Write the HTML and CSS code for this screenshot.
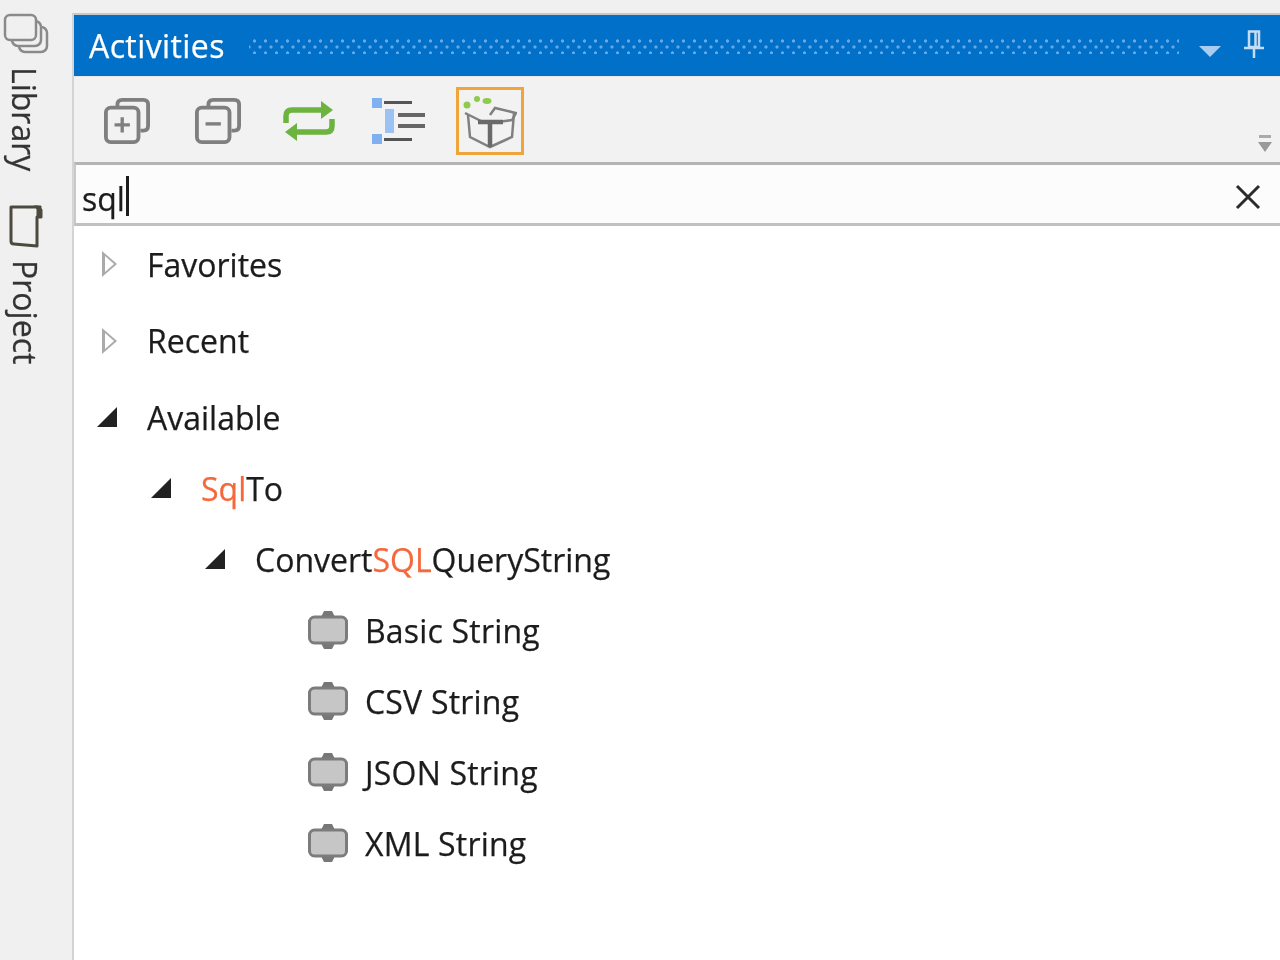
FILE: index.html
```html
<!DOCTYPE html>
<html lang="en">
<head>
  <meta charset="UTF-8" />
  <title>Activities</title>
  <link rel="stylesheet" href="styles.css">
</head>
<body>
<div class="page">
  <div class="rail">
    <div class="rail-tab rail-library">
      <svg class="rail-icon" width="46" height="42" viewBox="0 0 46 42" fill="#f0f0f0" stroke="#8a8a8a" stroke-width="2.5">
        <rect x="16" y="14" width="28" height="25" rx="6"/>
        <rect x="9" y="8" width="29" height="25" rx="6"/>
        <rect x="2" y="2" width="31" height="25" rx="5"/>
      </svg>
      <span class="rail-text">Library</span>
    </div>
    <div class="rail-tab rail-project">
      <svg class="rail-icon" width="36" height="46" viewBox="0 0 36 46" fill="none" stroke="#4c4a3e" stroke-width="3">
        <path d="M3 4H30L33 7V14H29V43L6 41Q3 41 3 38Z" stroke-linejoin="round"/>
        <path d="M26 3H33V14H29V6Z" fill="#4c4a3e" stroke-width="1"/>
      </svg>
      <span class="rail-text">Project</span>
    </div>
  </div>

  <div class="panel">
    <div class="titlebar">
      <span class="title">Activities</span>
      <div class="grip"></div>
      <svg class="menu-arrow" width="22" height="12" viewBox="0 0 22 12"><path d="M0 1H22L11 12Z" fill="#a9cdf0"/></svg>
      <svg class="pin" width="20" height="28" viewBox="0 0 20 28" fill="none" stroke="#c4ddf5" stroke-width="2.5">
        <path d="M5 1.5H15V17H5ZM11.5 2V16" />
        <path d="M0 18H20M10 18V28"/>
      </svg>
    </div>

    <div class="toolbar">
      <div class="tool">
        <svg width="46" height="46" viewBox="0 0 48 48" fill="none" stroke="#7f7f7f" stroke-width="4">
          <path d="M14 9V7Q14 2 19 2H41Q46 2 46 7V29Q46 34 41 34H38"/>
          <rect x="2" y="10" width="34" height="36" rx="5"/>
          <path d="M19 20V36M11 28H27" stroke-width="3.5"/>
        </svg>
      </div>
      <div class="tool">
        <svg width="46" height="46" viewBox="0 0 48 48" fill="none" stroke="#7f7f7f" stroke-width="4">
          <path d="M14 9V7Q14 2 19 2H41Q46 2 46 7V29Q46 34 41 34H38"/>
          <rect x="2" y="10" width="34" height="36" rx="5"/>
          <path d="M11 27H27" stroke-width="3.5"/>
        </svg>
      </div>
      <div class="tool">
        <svg width="52" height="40" viewBox="0 0 52 40" fill="none" stroke="#6cb33f" stroke-width="5.5">
          <path d="M3 22V15Q3 9 9 9H40"/>
          <path d="M49 18V25Q49 31 43 31H12"/>
          <path d="M38 0L50 9L38 18Z" fill="#6cb33f" stroke="none"/>
          <path d="M14 22L2 31L14 40Z" fill="#6cb33f" stroke="none"/>
        </svg>
      </div>
      <div class="tool">
        <svg width="54" height="48" viewBox="0 0 54 48">
          <rect x="0" y="1" width="10" height="10" fill="#7fb0f0"/>
          <rect x="0" y="37" width="10" height="10" fill="#7fb0f0"/>
          <rect x="13" y="12" width="9" height="24" fill="#9cc2f5"/>
          <rect x="12" y="4" width="28" height="3" fill="#555"/>
          <rect x="12" y="41" width="28" height="3" fill="#555"/>
          <rect x="26" y="16" width="27" height="4" fill="#666"/>
          <rect x="26" y="27" width="27" height="4" fill="#666"/>
        </svg>
      </div>
      <div class="tool tool-active">
        <svg class="box" width="54" height="54" viewBox="0 0 54 54" fill="none" stroke="#808080" stroke-width="2.5">
          <path d="M5 19L7 41L27 51L49 41L51 17"/>
          <path d="M27 19L32 12L53 17L49 24L35 26"/>
          <path d="M2 17L20 26"/>
          <path d="M15 26H40M27 26V51" stroke="#6a6a6a" stroke-width="4.5"/>
          <circle cx="4" cy="9" r="3.5" fill="#8fcb4a" stroke="none"/>
          <circle cx="14" cy="3" r="3" fill="#8fcb4a" stroke="none"/>
          <ellipse cx="24" cy="5" rx="4.5" ry="3" fill="#8fcb4a" stroke="none"/>
        </svg>
      </div>
      <svg class="overflow" width="14" height="18" viewBox="0 0 14 18">
        <rect x="1" y="0" width="12" height="3" fill="#aaa"/>
        <path d="M0 7H14L7 17Z" fill="#999"/>
      </svg>
    </div>

    <div class="search">
      <span class="search-text">sql</span><span class="caret"></span>
      <svg class="clear" width="26" height="26" viewBox="0 0 26 26" stroke="#2b2b2b" stroke-width="3"><path d="M2 2L24 24M24 2L2 24"/></svg>
    </div>

    <div class="tree">
      <div class="row row-top"><span class="arrow arrow-open"></span><span>Favorites</span></div>
      <div class="row row-top"><span class="arrow arrow-open"></span><span>Recent</span></div>
      <div class="row row-top"><span class="arrow arrow-down"></span><span>Available</span></div>
      <div class="row level-1"><span class="arrow arrow-down"></span><span><em>Sql</em>To</span></div>
      <div class="row level-2"><span class="arrow arrow-down"></span><span>Convert<em>SQL</em>QueryString</span></div>
      <div class="row level-3"><svg class="node" width="42" height="42" viewBox="0 0 42 42"><path d="M14 8L17 2H25L28 8ZM14 34L17 40H25L28 34Z" fill="#777"/><rect x="2.5" y="8" width="37" height="26" rx="5" fill="#c6c6c6" stroke="#7c7c7c" stroke-width="3"/></svg><span>Basic String</span></div>
      <div class="row level-3"><svg class="node" width="42" height="42" viewBox="0 0 42 42"><path d="M14 8L17 2H25L28 8ZM14 34L17 40H25L28 34Z" fill="#777"/><rect x="2.5" y="8" width="37" height="26" rx="5" fill="#c6c6c6" stroke="#7c7c7c" stroke-width="3"/></svg><span>CSV String</span></div>
      <div class="row level-3"><svg class="node" width="42" height="42" viewBox="0 0 42 42"><path d="M14 8L17 2H25L28 8ZM14 34L17 40H25L28 34Z" fill="#777"/><rect x="2.5" y="8" width="37" height="26" rx="5" fill="#c6c6c6" stroke="#7c7c7c" stroke-width="3"/></svg><span>JSON String</span></div>
      <div class="row level-3"><svg class="node" width="42" height="42" viewBox="0 0 42 42"><path d="M14 8L17 2H25L28 8ZM14 34L17 40H25L28 34Z" fill="#777"/><rect x="2.5" y="8" width="37" height="26" rx="5" fill="#c6c6c6" stroke="#7c7c7c" stroke-width="3"/></svg><span>XML String</span></div>
    </div>
  </div>
</div>
</body>
</html>
```

FILE: styles.css
```css
body {
  margin: 0;
  height: 960px;
  overflow: hidden;
  background: #f0f0f0;
  font-family: "Open Sans", "Noto Sans", sans-serif;
  font-size: 32px;
  color: #1c1c1c;
  -webkit-text-stroke: 0.25px;
}

/* the reference is a soft upscale, so the whole page gets a slight blur */
.page {
  display: flex;
  box-sizing: border-box;
  width: 1288px;
  height: 968px;
  margin: -4px;
  padding: 4px;
  background: #f0f0f0;
  filter: blur(0.7px);
}

/* left tabs */
.rail {
  width: 72px;
  flex-shrink: 0;
  padding-top: 13px;
}

.rail-tab {
  display: flex;
  flex-direction: column;
  align-items: flex-start;
}

.rail-library {
  padding-left: 3px;
  gap: 12px;
}

.rail-project {
  padding-left: 8px;
  margin-top: 32px;
  gap: 11px;
}

.rail-text {
  writing-mode: vertical-rl;
  line-height: 34px;
  color: #333;
}

.rail-library .rail-text {
  margin-left: 4px;
}

/* main panel */
.panel {
  flex: 1;
  min-width: 0;
  margin-top: 13px;
  border-left: 2px solid #d4d4d4;
  border-top: 2px solid #c8c8c8;
  background: #fff;
  display: flex;
  flex-direction: column;
}

.titlebar {
  height: 61px;
  background: #0070c8;
  display: flex;
  align-items: center;
  padding-left: 15px;
  padding-right: 16px;
}

.title {
  color: #fff;
  letter-spacing: 0.4px;
}

.grip {
  flex: 1;
  height: 16px;
  margin: 0 20px 0 24px;
  background-image:
    radial-gradient(circle, #66a8e4 1.4px, transparent 1.9px),
    radial-gradient(circle, #66a8e4 1.4px, transparent 1.9px);
  background-size: 11px 12px;
  background-position: 0 -3px, 5.5px 3px;
}

.menu-arrow {
  margin-top: 10px;
  margin-right: 23px;
}

.pin {
  margin-top: -4px;
}

.toolbar {
  height: 86px;
  box-sizing: border-box;
  background: #f2f2f2;
  display: flex;
  gap: 22.75px;
  padding: 10px 8px 0 19px;
  border-top: 1px solid #e6e6e6;
}

.tool {
  width: 68px;
  height: 68px;
  box-sizing: border-box;
  display: flex;
  align-items: center;
  justify-content: center;
}

.tool-active {
  border: 3px solid #f0a53c;
}

.box {
  margin-top: 4px;
}

.overflow {
  margin-left: auto;
  margin-top: 48px;
}

.search {
  height: 64px;
  box-sizing: border-box;
  display: flex;
  align-items: center;
  background: #fcfcfc;
  border-top: 3px solid #b4b4b4;
  border-bottom: 3px solid #c0c0c0;
  border-left: 2px solid #c8c8c8;
  padding: 8px 19px 0 6px;
}

.caret {
  width: 3px;
  height: 40px;
  background: #1c1c1c;
  margin: -4px 0 0 1px;
}

.clear {
  margin: -2px 0 0 auto;
}

/* tree */
.tree {
  flex: 1;
  background: #fff;
}

.row {
  height: 71px;
  display: flex;
  align-items: center;
  white-space: nowrap;
}

.row-top {
  height: 76.5px;
  padding-left: 23px;
}

.row-top + .level-1 {
  margin-top: -3px;
}

.level-1 {
  padding-left: 77px;
}

.level-2 {
  padding-left: 131px;
}

.level-3 {
  padding-left: 233px;
  letter-spacing: 0.2px;
}

.row em {
  font-style: normal;
  color: #f4693c;
}

.arrow {
  width: 50px;
  flex-shrink: 0;
  position: relative;
  height: 26px;
}

.arrow-open::before {
  content: "";
  position: absolute;
  left: 5px;
  top: 0;
  border-style: solid;
  border-width: 13px 0 13px 15px;
  border-color: transparent transparent transparent #aaa;
}

.arrow-open::after {
  content: "";
  position: absolute;
  left: 8px;
  top: 5px;
  border-style: solid;
  border-width: 8px 0 8px 9px;
  border-color: transparent transparent transparent #fff;
}

.arrow-down::before {
  content: "";
  position: absolute;
  left: 0;
  top: 3px;
  border-style: solid;
  border-width: 0 0 20px 20px;
  border-color: transparent transparent #222 transparent;
}

.node {
  margin-right: 16px;
}
```
